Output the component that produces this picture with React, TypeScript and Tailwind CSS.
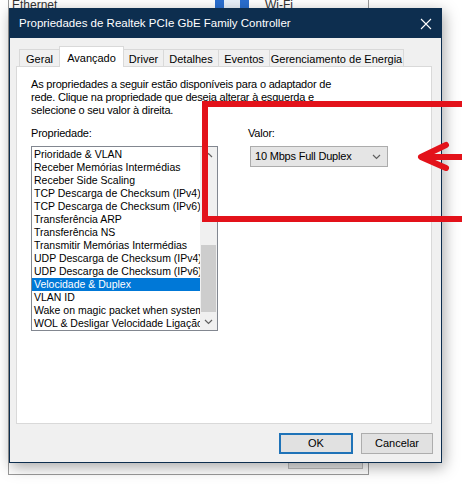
const propriedades = [
  'Prioridade & VLAN',
  'Receber Memórias Intermédias',
  'Receber Side Scaling',
  'TCP Descarga de Checksum (IPv4)',
  'TCP Descarga de Checksum (IPv6)',
  'Transferência ARP',
  'Transferência NS',
  'Transmitir Memórias Intermédias',
  'UDP Descarga de Checksum (IPv4)',
  'UDP Descarga de Checksum (IPv6)',
  'Velocidade & Duplex',
  'VLAN ID',
  'Wake on magic packet when system is in S0ix',
  'WOL & Desligar Velocidade Ligação',
]

const tabs = [
  { label: 'Geral', w: 'w-[41px]' },
  { label: 'Avançado', w: 'w-[65px]', active: true },
  { label: 'Driver', w: 'w-[41px]' },
  { label: 'Detalhes', w: 'w-[56px]' },
  { label: 'Eventos', w: 'w-[52px]' },
  { label: 'Gerenciamento de Energia', w: 'w-[135px]' },
]

function Chevron({ up = false }: { up?: boolean }) {
  return (
    <svg width="9" height="6" viewBox="0 0 9 6">
      <polyline
        points={up ? '1,5 4.5,1.5 8,5' : '1,1 4.5,4.5 8,1'}
        fill="none"
        stroke="#606060"
        strokeWidth="1.2"
      />
    </svg>
  )
}

export default function App() {
  return (
    <div className="relative w-[462px] h-[484px] overflow-hidden bg-white font-['Liberation_Sans',Arial,sans-serif] text-black">
      {/* janela de Conexões de Rede por trás */}
      <div className="absolute left-[8px] top-[-30px] w-[361px] h-[505px] border border-[#9a9a9a] bg-white">
        <div className="absolute left-[3px] top-[27px] text-[12px] leading-[14px] text-[#333]">Ethernet</div>
        <svg className="absolute left-[205px] top-[22px]" width="36" height="20" viewBox="0 0 36 20">
          <rect x="1" y="1" width="34" height="18" rx="3" fill="#2a6fd0" />
          <rect x="10" y="4" width="16" height="14" fill="#e8f1fb" />
        </svg>
        <div className="absolute left-[256px] top-[27px] text-[12px] leading-[14px] text-[#333]">Wi-Fi</div>
        <div className="absolute left-[279px] top-[491px] w-[75px] h-[7px] border border-[#bdbdbd] bg-[#e8e8e8]" />
      </div>

      {/* diálogo */}
      <div className="absolute left-[9px] top-[8px] w-[433px] h-[455px] flex flex-col border border-[#0d2e4f] bg-[#f0f0f0] shadow-[2px_4px_14px_rgba(0,0,0,0.35)]">
        <div className="h-[29px] shrink-0 flex items-center justify-between bg-[#0d2e4f] pl-[9px] pr-[9px] text-white text-[11.5px]">
          <span className="pt-[1px]">Propriedades de Realtek PCIe GbE Family Controller</span>
          <svg width="12" height="12" viewBox="0 0 12 12">
            <path d="M1 1 L11 11 M11 1 L1 11" stroke="#fff" strokeWidth="1.1" />
          </svg>
        </div>

        <div className="flex-1 flex flex-col pt-[8px]">
          <div className="flex items-end h-[20px] pl-[9px] text-[11px] whitespace-nowrap">
            {tabs.map((t, i) =>
              t.active ? (
                <div
                  key={t.label}
                  className={`${t.w} -ml-px h-[21px] mb-[-1px] relative z-10 flex items-start justify-center pt-[3px] border border-b-0 border-[#d9d9d9] bg-white`}
                >
                  {t.label}
                </div>
              ) : (
                <div
                  key={t.label}
                  className={`${t.w} ${i > 0 ? '-ml-px' : ''} h-[17px] flex items-center justify-center pt-[2px] border border-b-0 border-[#d9d9d9] bg-[#f0f0f0]`}
                >
                  {t.label}
                </div>
              )
            )}
          </div>

          <div className="ml-[6px] w-[416px] h-[358px] border border-[#d9d9d9] bg-white pl-[14px] pt-[11px] text-[11px] leading-[13px] tracking-[-0.2px]">
            <p>
              As propriedades a seguir estão disponíveis para o adaptador de
              <br />
              rede. Clique na propriedade que deseja alterar à esquerda e
              <br />
              selecione o seu valor à direita.
            </p>

            <div className="flex gap-[30px] mt-[10px]">
              <div className="flex flex-col">
                <span>Propriedade:</span>
                <div className="mt-[6px] w-[187px] h-[185px] flex border border-[#828790] bg-white tracking-normal">
                  <div className="flex-1 min-w-0 pt-[1px] text-[10.5px] leading-[13px]">
                    {propriedades.map((p, i) => (
                      <div
                        key={p}
                        className={`h-[13px] pl-[2px] whitespace-nowrap overflow-hidden ${
                          i === 10 ? 'bg-[#0078d7] text-white' : ''
                        }`}
                      >
                        {p}
                      </div>
                    ))}
                  </div>
                  <div className="w-[17px] flex flex-col bg-[#f0f0f0]">
                    <div className="h-[17px] flex items-center justify-center">
                      <Chevron up />
                    </div>
                    <div className="flex-1 flex flex-col pt-[81px] pb-[2px] px-[1px]">
                      <div className="h-[67px] bg-[#cdcdcd]" />
                    </div>
                    <div className="h-[17px] flex items-center justify-center">
                      <Chevron />
                    </div>
                  </div>
                </div>
              </div>

              <div className="flex flex-col">
                <span>Valor:</span>
                <div className="mt-[6px] ml-[2px] w-[138px] h-[21px] flex items-center justify-between pl-[4px] pr-[6px] border border-[#acacac] bg-[#e5e5e5]">
                  <span>10 Mbps Full Duplex</span>
                  <Chevron />
                </div>
              </div>
            </div>
          </div>

          <div className="flex justify-end gap-[8px] pr-[8px] mt-[9px] text-[11px]">
            <button className="w-[74px] h-[21px] border-2 border-[#1f73b8] bg-[#e1e1e1]">OK</button>
            <button className="w-[72px] h-[21px] border border-[#adadad] bg-[#e1e1e1]">Cancelar</button>
          </div>
        </div>
      </div>

      {/* marcação vermelha */}
      <div className="absolute left-[202px] top-[101px] w-[300px] h-[121px] border-[6px] border-[#e3121a]" />
      <svg className="absolute left-[414px] top-[138px]" width="48" height="38" viewBox="0 0 48 38">
        <path
          d="M48 19 H8 M32 7 L7 19 L32 30"
          fill="none"
          stroke="#e3121a"
          strokeWidth="6"
          strokeLinecap="round"
          strokeLinejoin="round"
        />
      </svg>
    </div>
  )
}
